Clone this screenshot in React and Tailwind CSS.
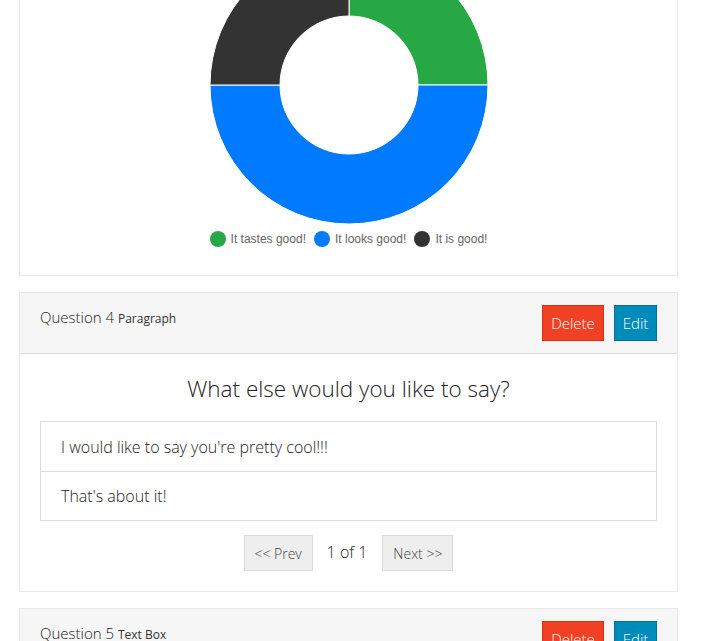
import React from "react";

const legend = [
  { label: "It tastes good!", color: "bg-[#28a745]" },
  { label: "It looks good!", color: "bg-[#007bff]" },
  { label: "It is good!", color: "bg-[#333333]" },
];

function Donut() {
  return (
    <svg width="280" height="280" viewBox="0 0 280 280" className="block">
      <path d="M 140 1 A 139 139 0 0 1 279 140 L 209 140 A 69 69 0 0 0 140 71 Z" fill="#28a745" stroke="#fff" strokeWidth="1" />
      <path d="M 279 140 A 139 139 0 0 1 1 140 L 71 140 A 69 69 0 0 0 209 140 Z" fill="#007bff" stroke="#fff" strokeWidth="1" />
      <path d="M 1 140 A 139 139 0 0 1 140 1 L 140 71 A 69 69 0 0 0 71 140 Z" fill="#333333" stroke="#fff" strokeWidth="1" />
    </svg>
  );
}

function PanelHeader({ num, type }) {
  return (
    <div className="flex h-[61px] items-center justify-between border-b border-[#dcdcdc] bg-[#f6f6f6] pl-5 pr-5">
      <p className="pb-3 text-[15px] text-[#222]">
        Question {num} <span className="text-[12px] font-normal text-[#333]">{type}</span>
      </p>
      <div className="flex gap-[10px]">
        <button type="button" className="h-9 w-[62px] border border-[#de2d0f] bg-[#f04124] text-[15px] font-light text-white">
          Delete
        </button>
        <button type="button" className="h-9 w-[43px] border border-[#007095] bg-[#008cba] text-[15px] font-light text-white">
          Edit
        </button>
      </div>
    </div>
  );
}

export default function App() {
  const answers = ["I would like to say you're pretty cool!!!", "That's about it!"];

  return (
    <div className="h-[641px] overflow-hidden bg-white font-['Open_Sans',sans-serif] font-light">
      <div className="ml-[19px] w-[659px] space-y-4">
        <div className="-mt-[76px] border border-[#e8e8e8] pb-[27px] pt-5">
          <div className="flex justify-center">
            <Donut />
          </div>
          <div className="mt-[5px] flex justify-center gap-[8px] font-['Liberation_Sans',Arial,sans-serif] text-[12px] font-normal text-[#666]">
            {legend.map((item) => (
              <div key={item.label} className="flex items-center gap-[5px]">
                <span className={`h-4 w-4 rounded-full ${item.color}`} />
                <span>{item.label}</span>
              </div>
            ))}
          </div>
        </div>

        <div className="border border-[#e8e8e8]">
          <PanelHeader num={4} type="Paragraph" />
          <div className="px-5 pb-5 pt-5">
            <h2 className="text-center text-[22.5px] leading-[30px] text-[#222]">What else would you like to say?</h2>
            <div className="mt-[17px] border border-[#dcdcdc]">
              {answers.map((a, i) => (
                <div
                  key={a}
                  className={`flex h-[49px] items-center px-5 text-[16px] text-[#222] ${i > 0 ? "border-t border-[#dcdcdc]" : ""}`}
                >
                  {a}
                </div>
              ))}
            </div>
            <div className="mt-[14px] flex items-center justify-center gap-[14px]">
              <button type="button" className="h-9 w-[69px] border border-[#dadada] bg-[#eeeeee] text-[14px] font-light text-[#444]">
                &lt;&lt; Prev
              </button>
              <span className="-mt-[3px] text-[16px] font-light text-[#222]">1 of 1</span>
              <button type="button" className="ml-px h-9 w-[71px] border border-[#dadada] bg-[#eeeeee] text-[14px] font-light text-[#444]">
                Next &gt;&gt;
              </button>
            </div>
          </div>
        </div>

        <div className="border border-[#e8e8e8]">
          <PanelHeader num={5} type="Text Box" />
          <div className="h-[200px]" />
        </div>
      </div>
    </div>
  );
}
